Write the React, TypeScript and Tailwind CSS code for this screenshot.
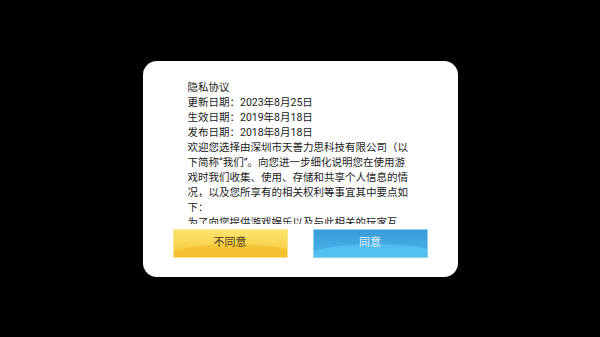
const LINES = [
  "隐私协议",
  "更新日期：2023年8月25日",
  "生效日期：2019年8月18日",
  "发布日期：2018年8月18日",
  "欢迎您选择由深圳市天善力思科技有限公司（以",
  "下简称“我们”。向您进一步细化说明您在使用游",
  "戏时我们收集、使用、存储和共享个人信息的情",
  "况，以及您所享有的相关权利等事宜其中要点如",
  "下：",
  "为了向您提供游戏娱乐以及与此相关的玩家互",
];

export default function App() {
  return (
    <div
      className="flex h-[337px] w-[600px] items-center justify-center bg-black"
      style={{ fontFamily: 'Roboto, "Noto Sans CJK SC", sans-serif' }}
    >
      <div className="flex h-[216px] w-[315px] flex-col rounded-[14px] bg-white pb-[19px] pt-[19px]">
        {/* agreement text, scroll area clipped above the buttons */}
        <div className="ml-[45px] h-[144px] overflow-hidden text-[10.5px] leading-[15px] text-[#1a1a1a]">
          {LINES.map((l, i) => (
            <div key={i} className="whitespace-nowrap">
              {l}
            </div>
          ))}
        </div>

        <div className="mt-auto flex justify-center gap-[25px]">
          <button className="relative h-[29px] w-[115px] overflow-hidden border border-[#fde28f] bg-gradient-to-b from-[#fde56e] to-[#f7c532] text-[11px] text-[#4a3a12]">
            <span className="absolute -left-[20px] top-[14px] h-[40px] w-[160px] rounded-[50%] bg-[#f2b928]/55" />
            <span className="relative">不同意</span>
          </button>
          <button className="relative h-[29px] w-[115px] overflow-hidden border border-[#8fd0f2] bg-gradient-to-b from-[#3a9bd9] to-[#4ab6eb] text-[11px] text-[#e6f4fc]">
            <span className="absolute -left-[20px] top-[14px] h-[40px] w-[160px] rounded-[50%] bg-[#5ccaf6]/60" />
            <span className="relative">同意</span>
          </button>
        </div>
      </div>
    </div>
  );
}
